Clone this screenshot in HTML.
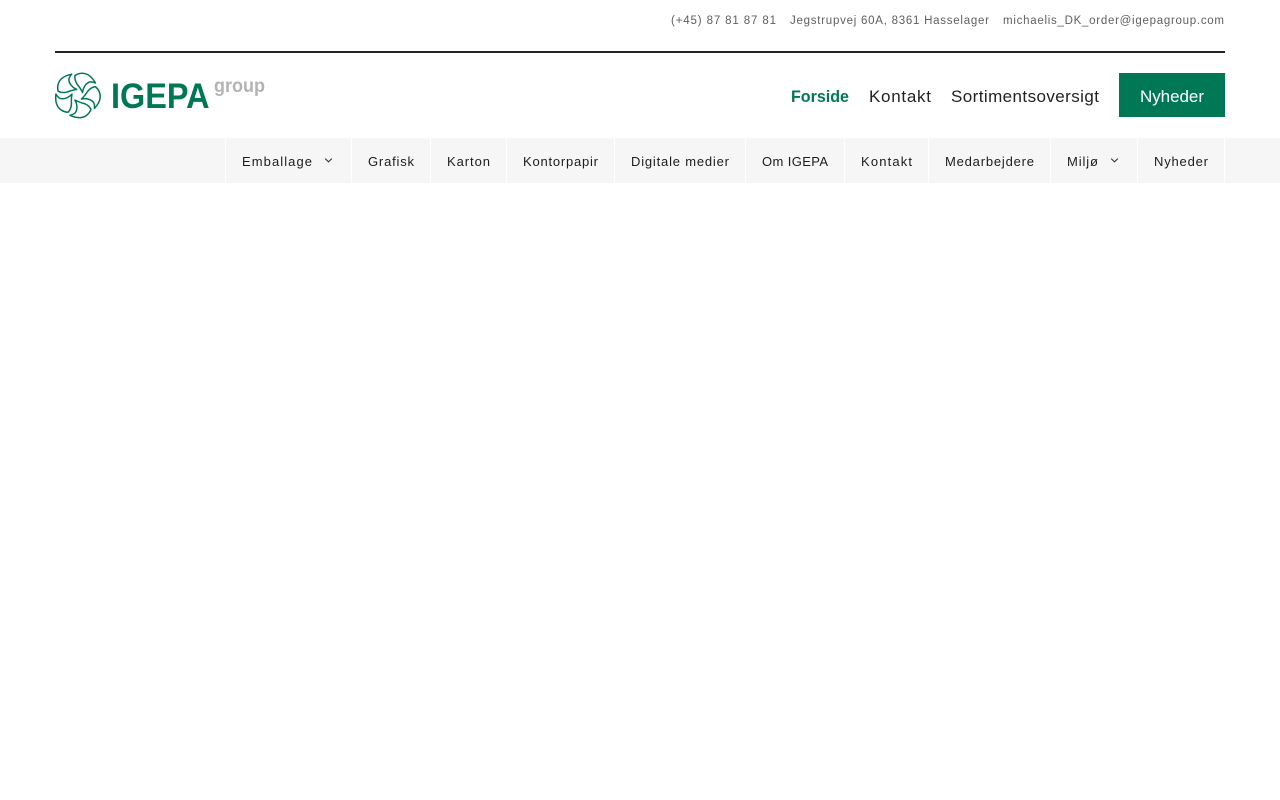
<!DOCTYPE html>
<html lang="da">
<head>
<meta charset="utf-8">
<title>IGEPA</title>
<style>
html,body{margin:0;padding:0;background:#fff;width:1280px;height:800px;overflow:hidden}
svg{display:block;position:absolute;left:0;top:0}
text{font-family:"Liberation Sans",sans-serif}
.top{font-size:11.5px;fill:#5f5f5f}
.main{font-size:17px;fill:#222}
.sub{font-size:13px;fill:#1c1c1c}
</style>
</head>
<body>
<svg width="1280" height="800" viewBox="0 0 1280 800" xmlns="http://www.w3.org/2000/svg">
<rect width="1280" height="800" fill="#fff"/>
<text class="top" x="671" y="24" textLength="105" lengthAdjust="spacing">(+45) 87 81 87 81</text>
<text class="top" x="790" y="24" textLength="199" lengthAdjust="spacing">Jegstrupvej 60A, 8361 Hasselager</text>
<text class="top" x="1003" y="24" textLength="221" lengthAdjust="spacing">michaelis_DK_order@igepagroup.com</text>
<rect x="55" y="51" width="1170" height="2" fill="#222"/>

<g fill="none" stroke="#007856" stroke-width="1.5" stroke-linejoin="round" stroke-linecap="round" transform="translate(77.5 95)">
<g id="p"><path d="M-2.5 -19.5C1 -22 6 -22.5 10 -20.5C13.5 -18.8 16 -15.5 18 -12C15.5 -13 14 -13.5 12 -13C8 -11.5 5.5 -7 5 -2.5C3.5 -6 1.5 -8.5 -0.5 -11C-2 -13.5 -3 -16.5 -2.5 -19.5Z"/></g>
<use href="#p" transform="rotate(72)"/>
<use href="#p" transform="rotate(144)"/>
<use href="#p" transform="rotate(216)"/>
<use href="#p" transform="rotate(288)"/>
</g>
<text x="111" y="108" font-size="35" font-weight="700" fill="#007856" textLength="98.5" lengthAdjust="spacingAndGlyphs">IGEPA</text>
<text x="214" y="92" font-size="19.5" font-weight="700" fill="#b3b3b3" textLength="51" lengthAdjust="spacingAndGlyphs">group</text>

<text class="main" x="791" y="102" font-weight="700" style="fill:#007856;font-size:16.5px" textLength="58" lengthAdjust="spacingAndGlyphs">Forside</text>
<text class="main" x="869" y="102" textLength="62" lengthAdjust="spacing">Kontakt</text>
<text class="main" x="951" y="102" textLength="148" lengthAdjust="spacing">Sortimentsoversigt</text>
<rect x="1119" y="73" width="106" height="44" fill="#007856"/>
<text class="main" x="1140" y="102" style="fill:#fff" textLength="64" lengthAdjust="spacing">Nyheder</text>

<rect x="0" y="138" width="1280" height="45" fill="#f6f6f6"/>
<g fill="#fff">
<rect x="225" y="138" width="1" height="45"/>
<rect x="351" y="138" width="1" height="45"/>
<rect x="430" y="138" width="1" height="45"/>
<rect x="506" y="138" width="1" height="45"/>
<rect x="614" y="138" width="1" height="45"/>
<rect x="745" y="138" width="1" height="45"/>
<rect x="844" y="138" width="1" height="45"/>
<rect x="928" y="138" width="1" height="45"/>
<rect x="1050" y="138" width="1" height="45"/>
<rect x="1137" y="138" width="1" height="45"/>
<rect x="1224" y="138" width="1" height="45"/>
</g>
<text class="sub" x="242" y="166" textLength="70" lengthAdjust="spacing">Emballage</text>
<path d="M325.2 158.6L328.5 161.9L331.8 158.6" fill="none" stroke="#333" stroke-width="1.1"/>
<text class="sub" x="368" y="166" textLength="46" lengthAdjust="spacing">Grafisk</text>
<text class="sub" x="447" y="166" textLength="43" lengthAdjust="spacing">Karton</text>
<text class="sub" x="523" y="166" textLength="75" lengthAdjust="spacing">Kontorpapir</text>
<text class="sub" x="631" y="166" textLength="98" lengthAdjust="spacing">Digitale medier</text>
<text class="sub" x="762" y="166" textLength="66" lengthAdjust="spacing">Om IGEPA</text>
<text class="sub" x="861" y="166" textLength="51" lengthAdjust="spacing">Kontakt</text>
<text class="sub" x="945" y="166" textLength="89" lengthAdjust="spacing">Medarbejdere</text>
<text class="sub" x="1067" y="166" textLength="31" lengthAdjust="spacing">Miljø</text>
<path d="M1111.2 158.6L1114.5 161.9L1117.8 158.6" fill="none" stroke="#333" stroke-width="1.1"/>
<text class="sub" x="1154" y="166" textLength="54" lengthAdjust="spacing">Nyheder</text>
</svg>
</body>
</html>
